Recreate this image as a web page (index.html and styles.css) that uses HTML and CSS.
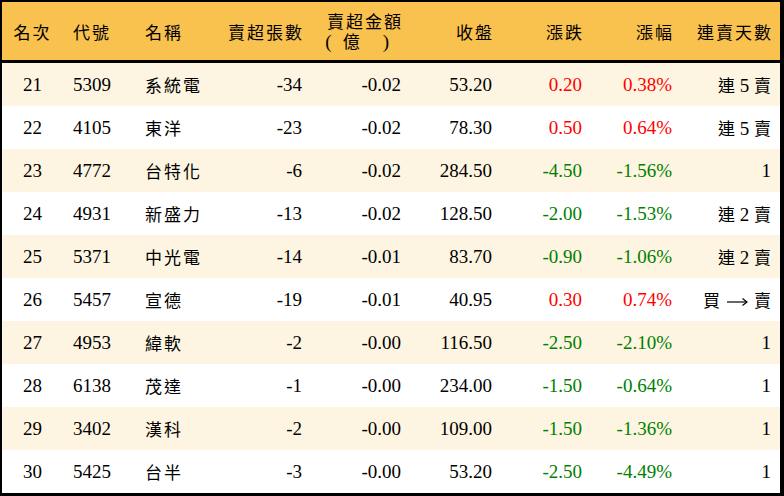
FILE: index.html
```
<!DOCTYPE html>
<html lang="zh-Hant">
<head>
<meta charset="utf-8">
<link rel="stylesheet" href="styles.css">
</head>
<body>
<div class="table">
  <div class="row head">
    <div class="c center cjk">名次</div>
    <div class="c left cjk">代號</div>
    <div class="c left cjk">名稱</div>
    <div class="c right cjk">賣超張數</div>
    <div class="c right cjk two">賣超金額<br><span class="pline"><span class="lp">(</span><span class="yi">億</span><span class="rp">)</span></span></div>
    <div class="c right cjk">收盤</div>
    <div class="c right cjk">漲跌</div>
    <div class="c right cjk">漲幅</div>
    <div class="c right cjk">連賣天數</div>
  </div>
  <div class="row odd">
    <div class="c center">21</div><div class="c left">5309</div><div class="c left cjk">系統電</div>
    <div class="c right">-34</div><div class="c right">-0.02</div><div class="c right">53.20</div>
    <div class="c right up">0.20</div><div class="c right up">0.38%</div><div class="c right"><span class="h">連</span> 5 <span class="h">賣</span></div>
  </div>
  <div class="row">
    <div class="c center">22</div><div class="c left">4105</div><div class="c left cjk">東洋</div>
    <div class="c right">-23</div><div class="c right">-0.02</div><div class="c right">78.30</div>
    <div class="c right up">0.50</div><div class="c right up">0.64%</div><div class="c right"><span class="h">連</span> 5 <span class="h">賣</span></div>
  </div>
  <div class="row odd">
    <div class="c center">23</div><div class="c left">4772</div><div class="c left cjk">台特化</div>
    <div class="c right">-6</div><div class="c right">-0.02</div><div class="c right">284.50</div>
    <div class="c right down">-4.50</div><div class="c right down">-1.56%</div><div class="c right">1</div>
  </div>
  <div class="row">
    <div class="c center">24</div><div class="c left">4931</div><div class="c left cjk">新盛力</div>
    <div class="c right">-13</div><div class="c right">-0.02</div><div class="c right">128.50</div>
    <div class="c right down">-2.00</div><div class="c right down">-1.53%</div><div class="c right"><span class="h">連</span> 2 <span class="h">賣</span></div>
  </div>
  <div class="row odd">
    <div class="c center">25</div><div class="c left">5371</div><div class="c left cjk">中光電</div>
    <div class="c right">-14</div><div class="c right">-0.01</div><div class="c right">83.70</div>
    <div class="c right down">-0.90</div><div class="c right down">-1.06%</div><div class="c right"><span class="h">連</span> 2 <span class="h">賣</span></div>
  </div>
  <div class="row">
    <div class="c center">26</div><div class="c left">5457</div><div class="c left cjk">宣德</div>
    <div class="c right">-19</div><div class="c right">-0.01</div><div class="c right">40.95</div>
    <div class="c right up">0.30</div><div class="c right up">0.74%</div><div class="c right"><span class="h">買</span><svg class="arr" width="21" height="10" viewBox="0 0 21 10"><line x1="0" y1="5" x2="20" y2="5" stroke="#000" stroke-width="1.2"/><polyline points="15.5,1.5 20,5 15.5,8.5" fill="none" stroke="#000" stroke-width="1.2"/></svg><span class="h">賣</span></div>
  </div>
  <div class="row odd">
    <div class="c center">27</div><div class="c left">4953</div><div class="c left cjk">緯軟</div>
    <div class="c right">-2</div><div class="c right">-0.00</div><div class="c right">116.50</div>
    <div class="c right down">-2.50</div><div class="c right down">-2.10%</div><div class="c right">1</div>
  </div>
  <div class="row">
    <div class="c center">28</div><div class="c left">6138</div><div class="c left cjk">茂達</div>
    <div class="c right">-1</div><div class="c right">-0.00</div><div class="c right">234.00</div>
    <div class="c right down">-1.50</div><div class="c right down">-0.64%</div><div class="c right">1</div>
  </div>
  <div class="row odd">
    <div class="c center">29</div><div class="c left">3402</div><div class="c left cjk">漢科</div>
    <div class="c right">-2</div><div class="c right">-0.00</div><div class="c right">109.00</div>
    <div class="c right down">-1.50</div><div class="c right down">-1.36%</div><div class="c right">1</div>
  </div>
  <div class="row">
    <div class="c center">30</div><div class="c left">5425</div><div class="c left cjk">台半</div>
    <div class="c right">-3</div><div class="c right">-0.00</div><div class="c right">53.20</div>
    <div class="c right down">-2.50</div><div class="c right down">-4.49%</div><div class="c right">1</div>
  </div>
</div>
</body>
</html>
```
FILE: styles.css
```
html, body {
  margin: 0;
  padding: 0;
  background: #ffffff;
}
.table {
  width: 784px;
  height: 496px;
  box-sizing: border-box;
  border-style: solid;
  border-color: #000000;
  border-width: 2px 4px 3px 2px;
  font-family: "Liberation Serif", "Noto Sans CJK TC", serif;
  font-size: 19px;
  color: #000000;
  display: flex;
  flex-direction: column;
}
.row {
  display: grid;
  grid-template-columns: 61px 72px 75px 102px 99px 91px 90px 90px 98px;
  height: 43px;
  align-items: center;
  background: #ffffff;
}
.row.odd {
  background: #fdf5e1;
}
.row.head {
  height: 58px;
  background: #f9c14e;
  border-bottom: 3px solid #000000;
}
.c {
  padding: 0 10px;
  white-space: nowrap;
}
.c:last-child {
  padding-right: 9px;
}
.center { text-align: center; }
.left { text-align: left; }
.right { text-align: right; }
.cjk {
  font-size: 17px;
  letter-spacing: 2px;
}
.right.cjk {
  margin-right: -2px;
}
.two {
  line-height: 19px;
  padding-top: 2px;
}
.pline {
  letter-spacing: 0;
}
.lp, .rp {
  font-family: "Liberation Serif", serif;
  font-size: 19px;
}
.lp {
  margin-right: 11px;
}
.yi {
  margin-right: 23px;
}
.rp {
  margin-right: 14px;
}
.h {
  font-size: 17px;
}
.arr {
  display: inline-block;
  vertical-align: middle;
  margin: 0 6px 0 7px;
  position: relative;
  top: -1px;
}
.up { color: #ff0000; }
.down { color: #008000; }
```
